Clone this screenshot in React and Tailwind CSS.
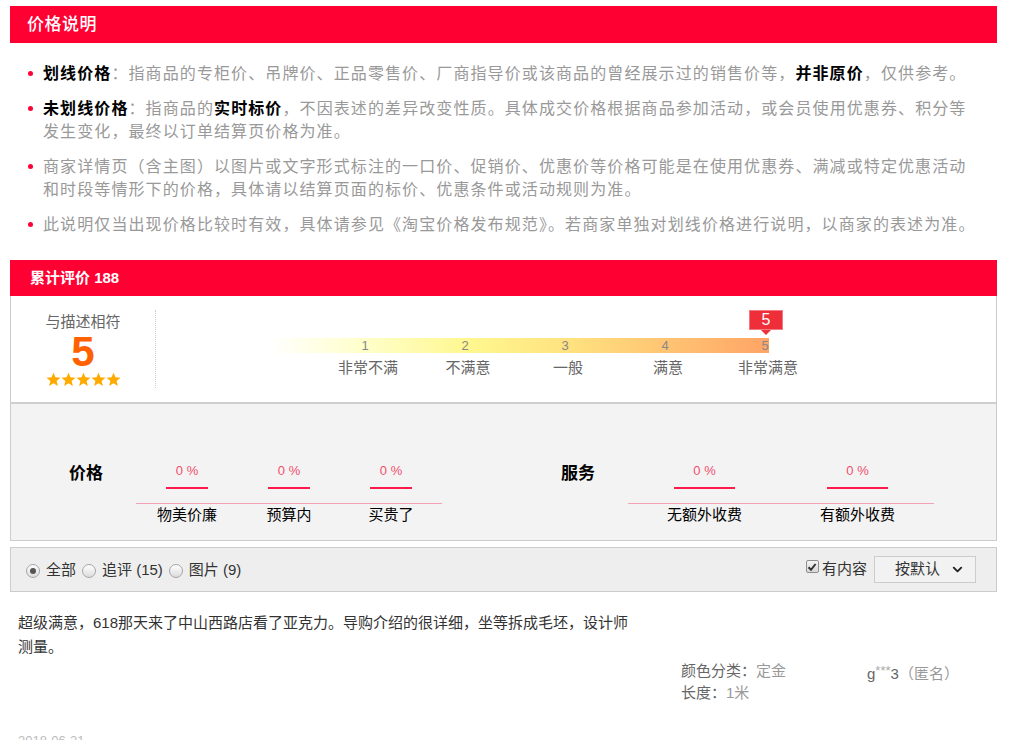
import React from "react";
import { ChevronDown } from "lucide-react";

function Star() {
  return (
    <svg width="15" height="15" viewBox="0 0 24 23" className="block">
      <polygon
        points="12,0.5 15.1,8 23.2,8.6 17,13.8 19,21.8 12,17.5 5,21.8 7,13.8 0.8,8.6 8.9,8"
        fill="#ffaa00"
      />
    </svg>
  );
}

function Radio({ checked }) {
  return (
    <span className="w-[14px] h-[14px] rounded-full border border-[#a6a6a6] bg-gradient-to-b from-[#ffffff] to-[#dcdcdc] flex items-center justify-center shrink-0">
      {checked && <span className="w-[6px] h-[6px] rounded-full bg-[#555]" />}
    </span>
  );
}

function Bullet({ children }) {
  return (
    <li className="flex items-start">
      <span className="w-[5px] h-[5px] rounded-full bg-[#ff0036] mt-[9px] mr-[10px] shrink-0" />
      <div>{children}</div>
    </li>
  );
}

function PctItem({ w }) {
  return (
    <div className="flex-1 flex flex-col items-center">
      <div className="text-[13px] leading-[16px] text-[#f0506e] h-[16px]">0 %</div>
      <div className={`${w} h-[2px] bg-[#ff1a4b] mt-[8px]`} />
    </div>
  );
}

export default function App() {
  return (
    <div className="w-[1011px] min-h-[740px] bg-white font-['Liberation_Sans','Noto_Sans_CJK_SC',sans-serif] overflow-hidden">
      <div className="ml-[10px] w-[987px]">
        {/* 价格说明 header */}
        <div className="mt-[6px] h-[37px] bg-[#ff0033] flex items-center pl-[17px] text-white text-[17px] font-medium tracking-[0.5px]">
          价格说明
        </div>

        {/* list */}
        <ul className="pl-[18px] pt-[19px] flex flex-col gap-[12px] text-[16px] leading-[23px] tracking-[1.1px] text-[#999]">
          <Bullet>
            <div className="whitespace-nowrap">
              <b className="text-black font-bold">划线价格</b>：指商品的专柜价、吊牌价、正品零售价、厂商指导价或该商品的曾经展示过的销售价等，<b className="text-black font-bold">并非原价</b>，仅供参考。
            </div>
          </Bullet>
          <Bullet>
            <div className="whitespace-nowrap">
              <b className="text-black font-bold">未划线价格</b>：指商品的<b className="text-black font-bold">实时标价</b>，不因表述的差异改变性质。具体成交价格根据商品参加活动，或会员使用优惠券、积分等
            </div>
            <div className="whitespace-nowrap">发生变化，最终以订单结算页价格为准。</div>
          </Bullet>
          <Bullet>
            <div className="whitespace-nowrap">
              商家详情页（含主图）以图片或文字形式标注的一口价、促销价、优惠价等价格可能是在使用优惠券、满减或特定优惠活动
            </div>
            <div className="whitespace-nowrap">和时段等情形下的价格，具体请以结算页面的标价、优惠条件或活动规则为准。</div>
          </Bullet>
          <Bullet>
            <div className="whitespace-nowrap">
              此说明仅当出现价格比较时有效，具体请参见《淘宝价格发布规范》。若商家单独对划线价格进行说明，以商家的表述为准。
            </div>
          </Bullet>
        </ul>

        {/* 累计评价 header */}
        <div className="mt-[24px] h-[36px] bg-[#ff0033] flex items-center pl-[20px] text-white text-[15px] font-bold">
          累计评价 188
        </div>

        {/* rating box */}
        <div className="border-x border-b border-[#ccc]">
          <div className="h-[108px] flex items-start border-b-2 border-[#cfcfcf]">
            <div className="w-[144px] flex flex-col items-center pt-[16px]">
              <div className="text-[15px] leading-[20px] text-[#666]">与描述相符</div>
              <div className="mt-[5px] text-[42px] leading-[30px] font-bold text-[#ff6000]">5</div>
              <div className="mt-[5px] flex">
                <Star />
                <Star />
                <Star />
                <Star />
                <Star />
              </div>
            </div>
            <div className="mt-[14px] h-[78px] w-0 border-l border-dotted border-[#cfcfcf]" />
            <div className="ml-[114px] mt-[42px] relative">
              <div className="w-[499px] h-[15px] bg-[linear-gradient(to_right,rgba(255,255,235,0)_0%,#ffffcc_18%,#fff78f_40%,#ffe27f_60%,#ffc372_80%,#ffa466_100%)] flex pl-[45px]">
                {["1", "2", "3", "4", "5"].map((n) => (
                  <div key={n} className="w-[100px] shrink-0 text-center text-[13px] leading-[15px] text-[#888]">
                    {n}
                  </div>
                ))}
              </div>
              <div className="flex pl-[48px] mt-[5px]">
                {["非常不满", "不满意", "一般", "满意", "非常满意"].map((n) => (
                  <div key={n} className="w-[100px] shrink-0 text-center text-[15px] leading-[20px] text-[#666]">
                    {n}
                  </div>
                ))}
              </div>
              <div className="absolute left-[479px] top-[-28px] w-[34px] h-[20px] bg-[#ee2f39] border border-[#f27a85] flex items-center justify-center text-white text-[16px] leading-none">
                5
                <span className="absolute left-1/2 -translate-x-1/2 top-[19px] w-0 h-0 border-x-[5px] border-x-transparent border-t-[5px] border-t-[#ee2f39]" />
              </div>
            </div>
          </div>

          <div className="h-[136px] bg-[#f3f3f3] pt-[59px] pl-[25px] flex items-start">
            <div className="w-[100px] text-center text-[17px] font-bold text-black leading-[20px] mt-[1px]">价格</div>
            <div className="w-[306px]">
              <div className="flex border-b border-[#f4a3b6] pb-[14px]">
                <PctItem w="w-[42px]" />
                <PctItem w="w-[42px]" />
                <PctItem w="w-[42px]" />
              </div>
              <div className="flex text-[15px] leading-[22px] text-black">
                <div className="flex-1 text-center">物美价廉</div>
                <div className="flex-1 text-center">预算内</div>
                <div className="flex-1 text-center">买贵了</div>
              </div>
            </div>
            <div className="w-[86px]" />
            <div className="w-[100px] text-center text-[17px] font-bold text-black leading-[20px] mt-[1px]">服务</div>
            <div className="w-[306px]">
              <div className="flex border-b border-[#f4a3b6] pb-[14px]">
                <PctItem w="w-[61px]" />
                <PctItem w="w-[61px]" />
              </div>
              <div className="flex text-[15px] leading-[22px] text-black">
                <div className="flex-1 text-center">无额外收费</div>
                <div className="flex-1 text-center">有额外收费</div>
              </div>
            </div>
          </div>
        </div>

        {/* filter bar */}
        <div className="mt-[6px] h-[45px] border border-[#ccc] bg-[#eeeeee] flex items-center pl-[15px] pr-[20px] text-[15px] text-[#333]">
          <div className="flex items-center gap-[6px] mt-[2px]">
            <Radio checked />
            <span>全部</span>
            <Radio />
            <span>追评 (15)</span>
            <Radio />
            <span>图片 (9)</span>
          </div>
          <div className="ml-auto flex items-center">
            <span className="w-[13px] h-[13px] border border-[#8f8f8f] bg-gradient-to-b from-[#f4f4f4] to-[#d8d8d8] rounded-[2px] flex items-center justify-center mt-[-6px]">
              <svg width="10" height="10" viewBox="0 0 10 10">
                <path d="M1.5 5.2 L4 7.8 L8.6 2" stroke="#333" strokeWidth="2" fill="none" />
              </svg>
            </span>
            <span className="ml-[3px]">有内容</span>
            <div className="ml-[7px] w-[102px] h-[27px] border border-[#ccc] bg-[#f2f2f2] flex items-center pl-[20px] pr-[10px]">
              <span>按默认</span>
              <ChevronDown className="ml-auto" size={15} strokeWidth={3} color="#222" />
            </div>
          </div>
        </div>

        {/* review */}
        <div className="pl-[8px] pt-[19px] text-[15px] leading-[24px] text-[#333]">
          <div className="whitespace-nowrap">超级满意，618那天来了中山西路店看了亚克力。导购介绍的很详细，坐等拆成毛坯，设计师</div>
          <div>测量。</div>
        </div>
        <div className="flex items-start mt-[1px] ml-[671px]">
          <div className="w-[186px] text-[15px] leading-[22px]">
            <div>
              <span className="text-[#666]">颜色分类：</span>
              <span className="text-[#999]">定金</span>
            </div>
            <div>
              <span className="text-[#666]">长度：</span>
              <span className="text-[#999]">1米</span>
            </div>
          </div>
          <div className="mt-[3px] text-[15px] leading-[22px] text-[#666]">
            g<span className="text-[#aaa] text-[13px] relative top-[-4px]">***</span>3<span className="text-[#999]">（匿名）</span>
          </div>
        </div>
        <div className="pl-[8px] mt-[29px] text-[13px] leading-[16px] text-[#bbb]">2018-06-21</div>
      </div>
    </div>
  );
}
